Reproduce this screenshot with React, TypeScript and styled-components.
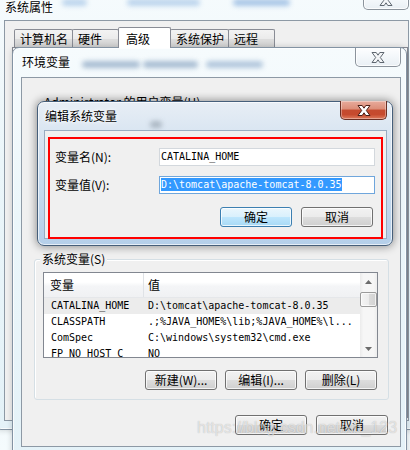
import React from "react";
import styled, { createGlobalStyle } from "styled-components";

const CJK = `"Noto Sans CJK SC", "Noto Sans", sans-serif`;
const MONO = `"DejaVu Sans Mono", "Liberation Mono", "Noto Sans CJK SC", monospace`;

const GlobalStyle = createGlobalStyle`
  html, body { margin: 0; padding: 0; }
  body {
    width: 410px; height: 450px; overflow: hidden;
    background: #f6fbfd; font-family: ${CJK}; font-size: 12px; color: #000;
  }
  * { box-sizing: border-box; }
`;

const Desktop = styled.div`
  position: relative;
  width: 410px;
  height: 450px;
  overflow: hidden;
  background: linear-gradient(180deg, #f7fcfe 0%, #e6f5fa 50%, #f5fbfd 100%);
`;

const Window = styled.section<{
  $x: number; $y: number; $w: number; $h: number; $pad: string; $active?: boolean;
}>`
  position: absolute;
  left: ${(p) => p.$x}px;
  top: ${(p) => p.$y}px;
  width: ${(p) => p.$w}px;
  height: ${(p) => p.$h}px;
  display: flex;
  flex-direction: column;
  padding: ${(p) => p.$pad};
  border: 1px solid ${(p) => (p.$active ? "#465f7a" : "#8393a3")};
  border-radius: 7px;
  background: ${(p) =>
    p.$active
      ? "linear-gradient(180deg, #e8eef5 0%, #dae6f2 20%, #c6dbef 60%, #b5cfe9 100%)"
      : "linear-gradient(180deg, #f6fbfd 0%, #ebf6fa 40%, #e4f2f8 100%)"};
  box-shadow: ${(p) =>
    p.$active
      ? "0 0 9px 1px rgba(0,0,0,0.4), inset 0 0 0 1px rgba(255,255,255,0.65)"
      : "0 0 6px rgba(0,0,0,0.18), inset 0 0 0 1px rgba(255,255,255,0.75)"};
`;

const TitleBar = styled.header<{ $h: number }>`
  flex: none;
  height: ${(p) => p.$h}px;
  display: flex;
  align-items: flex-start;
`;

const Title = styled.h1<{ $top: number; $left: number }>`
  margin: ${(p) => p.$top}px 0 0 ${(p) => p.$left}px;
  font: 400 12px/14px ${CJK};
  color: #000;
  white-space: nowrap;
  text-shadow: 0 0 6px #fff, 0 0 3px #fff;
`;

const Haze = styled.span<{ $w: number; $ml: number; $top: number; $c?: string }>`
  flex: none;
  width: ${(p) => p.$w}px;
  height: 7px;
  margin: ${(p) => p.$top}px 0 0 ${(p) => p.$ml}px;
  border-radius: 4px;
  background: ${(p) => p.$c ?? "#9dbad6"};
  filter: blur(2.5px);
  opacity: 0.75;
`;

const CloseButton = styled.button<{ $active?: boolean; $w: number; $h: number; $top: number }>`
  flex: none;
  margin: ${(p) => p.$top}px 0 0 auto;
  width: ${(p) => p.$w}px;
  height: ${(p) => p.$h}px;
  padding: 0;
  display: flex;
  align-items: center;
  justify-content: center;
  border: 1px solid ${(p) => (p.$active ? "#6a2f24" : "#8b939c")};
  border-top: none;
  border-radius: 0 0 5px 5px;
  background: ${(p) =>
    p.$active
      ? "linear-gradient(180deg, #e8ab9c 0%, #dc8d78 45%, #c54b2f 50%, #c64a2e 75%, #de7a5c 100%)"
      : "linear-gradient(180deg, #fdfeff 0%, #f3f7fa 50%, #e9eff4 100%)"};
  box-shadow: inset 0 0 0 1px rgba(255, 255, 255, ${(p) => (p.$active ? 0.35 : 0.8)});
`;

const CloseGlyph = ({ active }: { active?: boolean }) => (
  <svg width="14" height="11" viewBox="0 0 14 11" aria-hidden="true">
    <path
      d="M1 .5h4.2L7 3.2 8.8.5H13L9.3 5.5 13 10.5H8.8L7 7.8 5.2 10.5H1l3.7-5z"
      fill={active ? "#ffffff" : "#f4f6f8"}
      stroke={active ? "#4a1f17" : "#5f6770"}
      strokeWidth="1"
      strokeLinejoin="round"
    />
  </svg>
);

/* ---------- 系统属性 ---------- */
const SheetBody = styled.div`
  flex: 1;
  display: flex;
  flex-direction: column;
  background: #f0f0f0;
  border: 1px solid #8d99a5;
  padding: 5px 0 0 7px;
`;

const TabRow = styled.div`
  flex: none;
  display: flex;
  align-items: flex-end;
  height: 21px;
  margin-left: 2px;
`;

const Tab = styled.div<{ $w: number; $selected?: boolean }>`
  flex: none;
  width: ${(p) => p.$w}px;
  height: ${(p) => (p.$selected ? 21 : 18)}px;
  margin: 0 -1px ${(p) => (p.$selected ? -1 : 0)}px 0;
  padding: ${(p) => (p.$selected ? "2px 0 0 7px" : "0 0 0 5px")};
  border: 1px solid #898c95;
  border-bottom: none;
  border-radius: 2px 2px 0 0;
  background: ${(p) =>
    p.$selected ? "#ffffff" : "linear-gradient(180deg, #f3f3f3 0%, #ebebeb 50%, #dddddd 51%, #d4d4d4 100%)"};
  position: relative;
  z-index: ${(p) => (p.$selected ? 1 : 0)};
  font: 400 12px/17px ${CJK};
  white-space: nowrap;
`;

const TabPanel = styled.div`
  flex: 1;
  margin-bottom: 2px;
  border: 1px solid #898c95;
  background: #ffffff;
`;

/* ---------- 环境变量 ---------- */
const EnvBody = styled.div`
  flex: none;
  height: 370px;
  display: flex;
  flex-direction: column;
  background: #f0f0f0;
  border: 1px solid #8d99a5;
  padding: 17px 11px 0 12px;
`;

const UserVars = styled.div`
  flex: none;
  height: 164px;
  padding-left: 10px;
  font: 400 12px/14px ${CJK};
  white-space: nowrap;
`;

const GroupBox = styled.div`
  flex: none;
  width: 355px;
  display: flex;
  flex-direction: column;
  border: 1px solid #d5dfe5;
  border-radius: 3px;
  padding: 0 11px 9px 8px;
  box-shadow: inset 1px 1px 0 #fff;
`;

const GroupLabel = styled.span`
  align-self: flex-start;
  margin: -8px 0 0 -3px;
  padding: 0 2px;
  background: #f0f0f0;
  font: 400 12px/14px ${CJK};
  white-space: nowrap;
`;

const List = styled.div`
  flex: none;
  width: 335px;
  height: 86px;
  margin-top: 6px;
  display: flex;
  border: 1px solid #828790;
  background: #ffffff;
`;

const ListBody = styled.div`
  flex: 1;
  min-width: 0;
  overflow: hidden;
  display: flex;
  flex-direction: column;
`;

const HeaderRow = styled.div`
  flex: none;
  height: 25px;
  display: grid;
  grid-template-columns: 100px 1fr;
  background: linear-gradient(180deg, #ffffff 0%, #ffffff 38%, #f4f5f7 55%, #f0f1f3 100%);
  border-bottom: 1px solid #e5e7ea;
`;

const HeaderCell = styled.div<{ $pl: number }>`
  padding-left: ${(p) => p.$pl}px;
  font: 400 12px/24px ${CJK};
  white-space: nowrap;
  &:first-child { border-right: 1px solid #dfe2e6; }
`;

const Row = styled.div<{ $selected?: boolean }>`
  flex: none;
  height: 16px;
  display: grid;
  grid-template-columns: 100px 1fr;
  background: ${(p) => (p.$selected ? "#ececec" : "transparent")};
  font: 400 10px/16px ${MONO};
  white-space: nowrap;
`;

const Cell = styled.div<{ $pl: number }>`
  overflow: hidden;
  padding-left: ${(p) => p.$pl}px;
`;

const ScrollBar = styled.div`
  flex: none;
  width: 17px;
  display: flex;
  flex-direction: column;
  background: linear-gradient(90deg, #ebebeb 0%, #f6f6f6 20%, #f6f6f6 80%, #ededed 100%);
`;

const ScrollArrow = styled.div`
  flex: none;
  height: 17px;
  display: flex;
  align-items: center;
  justify-content: center;
`;

const Thumb = styled.div`
  flex: none;
  height: 15px;
  margin: 2px 0 0 0;
  border: 1px solid #9b9b9b;
  border-radius: 2px;
  background: linear-gradient(90deg, #f5f5f5 0%, #ececec 50%, #dcdcdc 51%, #d2d2d2 100%);
  box-shadow: inset 0 0 0 1px rgba(255,255,255,0.7);
`;

const Track = styled.div`
  flex: 1;
`;

const ButtonRow = styled.div<{ $mt: number; $gap: number; $mr?: number }>`
  flex: none;
  display: flex;
  justify-content: flex-end;
  gap: ${(p) => p.$gap}px;
  margin: ${(p) => p.$mt}px ${(p) => p.$mr ?? 0}px 0 0;
`;

const Button = styled.button<{ $w: number; $default?: boolean }>`
  flex: none;
  width: ${(p) => p.$w}px;
  height: 20px;
  padding: 0;
  border: 1px solid ${(p) => (p.$default ? "#3c7fb1" : "#707070")};
  border-radius: 3px;
  background: ${(p) =>
    p.$default
      ? "linear-gradient(180deg, #eaf6fd 0%, #d9f0fc 50%, #bee6fd 51%, #a7d9f5 100%)"
      : "linear-gradient(180deg, #f2f2f2 0%, #ebebeb 50%, #dddddd 51%, #cfcfcf 100%)"};
  box-shadow: inset 0 0 0 1px rgba(255, 255, 255, 0.75);
  font: 400 12px/18px ${CJK};
  color: #000;
  white-space: nowrap;
`;

/* ---------- 编辑系统变量 ---------- */
const EditBody = styled.div`
  flex: 1;
  position: relative;
  background: #f0f0f0;
  border: 1px solid #98acc1;
  padding: 17px 0 0 10px;
`;

const FormGrid = styled.div`
  display: grid;
  grid-template-columns: 104px 216px;
  row-gap: 10px;
  align-items: center;
`;

const FieldLabel = styled.label`
  font: 400 12px/14px ${CJK};
  white-space: nowrap;
`;

const Field = styled.div<{ $focused?: boolean }>`
  height: 18px;
  padding: 0 0 0 1px;
  border: 1px solid ${(p) => (p.$focused ? "#6fa6dc" : "#d3d8dd")};
  background: #ffffff;
  font: 400 10px/16px ${MONO};
  white-space: nowrap;
  overflow: hidden;
`;

const Selected = styled.span`
  background: #3399ff;
  color: #ffffff;
  padding: 1px 0;
`;

const DialogButtons = styled.div`
  grid-column: 1 / -1;
  justify-self: end;
  display: flex;
  gap: 9px;
  margin: 3px 2px 0 0;
`;

const Annotation = styled.div`
  position: absolute;
  left: 3px;
  top: 6px;
  width: 335px;
  height: 102px;
  border: 2px solid #ff0000;
  pointer-events: none;
`;

const Watermark = styled.div`
  position: absolute;
  left: 197px;
  top: 419px;
  font: 400 16px/18px "Liberation Sans", Arial, sans-serif;
  color: rgba(255, 255, 255, 0.6);
  text-shadow: 0 0 1px rgba(0, 0, 0, 0.28);
  white-space: nowrap;
  pointer-events: none;
`;

const tabs = [
  { label: "计算机名", w: 59 },
  { label: "硬件", w: 47 },
  { label: "高级", w: 53, selected: true },
  { label: "系统保护", w: 59 },
  { label: "远程", w: 47 },
];

const rows = [
  { name: "CATALINA_HOME", value: "D:\\tomcat\\apache-tomcat-8.0.35", selected: true },
  { name: "CLASSPATH", value: ".;%JAVA_HOME%\\lib;%JAVA_HOME%\\l..." },
  { name: "ComSpec", value: "C:\\windows\\system32\\cmd.exe" },
  { name: "FP_NO_HOST_C", value: "NO" },
];

export default function App() {
  return (
    <>
      <GlobalStyle />
      <Desktop>
        {/* 系统属性 */}
        <Window $x={-6} $y={-14} $w={424} $h={444} $pad="0 8px 8px 9px">
          <TitleBar $h={33}>
            <Title $top={13} $left={1}>系统属性</Title>
            <Haze $w={25} $ml={9} $top={12} $c="#a9c8e8" />
            <Haze $w={73} $ml={40} $top={12} $c="#a9c8e8" />
            <Haze $w={57} $ml={33} $top={12} $c="#8fb5e0" />
            <CloseButton $w={46} $h={18} $top={5} aria-label="关闭">
              <CloseGlyph />
            </CloseButton>
          </TitleBar>
          <SheetBody>
            <TabRow>
              {tabs.map((t) => (
                <Tab key={t.label} $w={t.w} $selected={t.selected}>
                  {t.label}
                </Tab>
              ))}
            </TabRow>
            <TabPanel />
          </SheetBody>
        </Window>

        {/* 环境变量 */}
        <Window $x={12} $y={47} $w={395} $h={420} $pad="0 5px 0 8px">
          <TitleBar $h={29}>
            <Title $top={7} $left={1}>环境变量</Title>
            <Haze $w={58} $ml={12} $top={13} $c="#8fa9c5" />
            <Haze $w={55} $ml={3} $top={13} $c="#8fa9c5" />
            <Haze $w={57} $ml={8} $top={13} $c="#9cb6d2" />
            <CloseButton $w={46} $h={19} $top={0} aria-label="关闭">
              <CloseGlyph />
            </CloseButton>
          </TitleBar>
          <EnvBody>
            <UserVars>Administrator 的用户变量(U)</UserVars>
            <GroupBox>
              <GroupLabel>系统变量(S)</GroupLabel>
              <List>
                <ListBody>
                  <HeaderRow>
                    <HeaderCell $pl={6}>变量</HeaderCell>
                    <HeaderCell $pl={4}>值</HeaderCell>
                  </HeaderRow>
                  {rows.map((r) => (
                    <Row key={r.name} $selected={r.selected}>
                      <Cell $pl={7}>{r.name}</Cell>
                      <Cell $pl={4}>{r.value}</Cell>
                    </Row>
                  ))}
                </ListBody>
                <ScrollBar>
                  <ScrollArrow>
                    <svg width="7" height="4" viewBox="0 0 7 4" aria-hidden="true">
                      <path d="M0 4L3.5 0 7 4z" fill="#6b6b6b" />
                    </svg>
                  </ScrollArrow>
                  <Thumb />
                  <Track />
                  <ScrollArrow>
                    <svg width="7" height="4" viewBox="0 0 7 4" aria-hidden="true">
                      <path d="M0 0L3.5 4 7 0z" fill="#6b6b6b" />
                    </svg>
                  </ScrollArrow>
                </ScrollBar>
              </List>
              <ButtonRow $mt={12} $gap={8}>
                <Button $w={72}>新建(W)...</Button>
                <Button $w={72}>编辑(I)...</Button>
                <Button $w={72}>删除(L)</Button>
              </ButtonRow>
            </GroupBox>
            <ButtonRow $mt={15} $gap={9} $mr={1}>
              <Button $w={72}>确定</Button>
              <Button $w={72}>取消</Button>
            </ButtonRow>
          </EnvBody>
        </Window>

        {/* 编辑系统变量 */}
        <Window $x={37} $y={101} $w={356} $h={145} $pad="0 5px 6px 6px" $active>
          <TitleBar $h={28}>
            <Title $top={7} $left={1}>编辑系统变量</Title>
            <Haze $w={12} $ml={33} $top={19} $c="#9aa6b2" />
            <CloseButton $active $w={47} $h={19} $top={-1} aria-label="关闭">
              <CloseGlyph active />
            </CloseButton>
          </TitleBar>
          <EditBody>
            <FormGrid>
              <FieldLabel>变量名(N):</FieldLabel>
              <Field>CATALINA_HOME</Field>
              <FieldLabel>变量值(V):</FieldLabel>
              <Field $focused>
                <Selected>D:\tomcat\apache-tomcat-8.0.35</Selected>
              </Field>
              <DialogButtons>
                <Button $w={72} $default>确定</Button>
                <Button $w={72}>取消</Button>
              </DialogButtons>
            </FormGrid>
            <Annotation />
          </EditBody>
        </Window>

        <Watermark>https://blog.csdn.net/xb_123</Watermark>
      </Desktop>
    </>
  );
}
